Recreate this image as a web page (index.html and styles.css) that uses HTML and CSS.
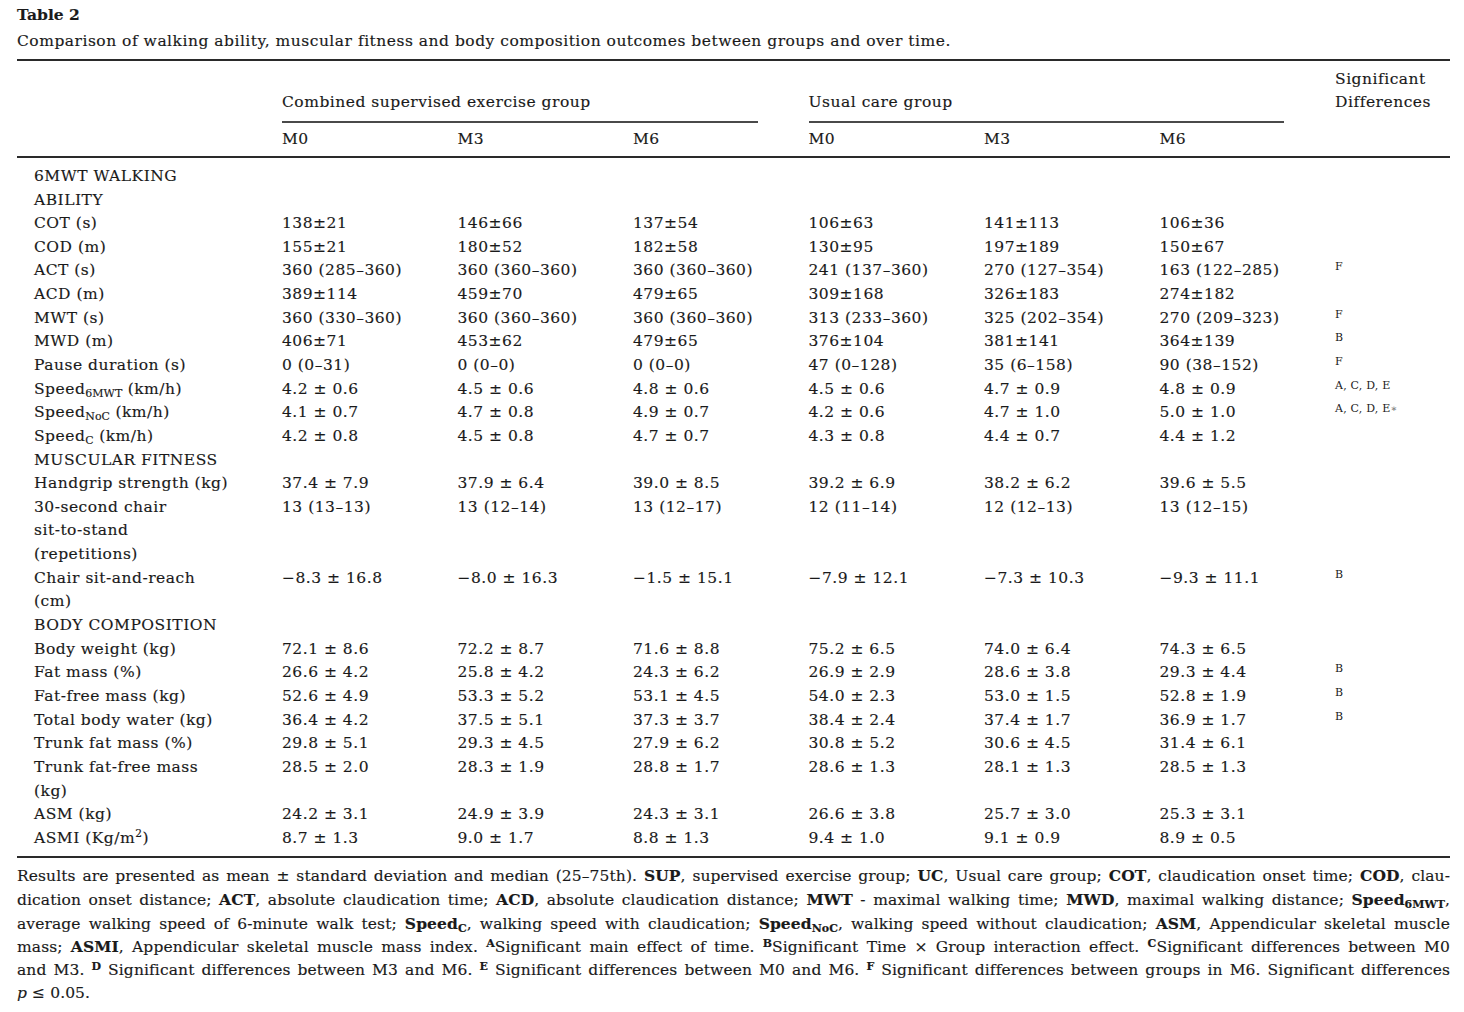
FILE: index.html
```html
<!DOCTYPE html>
<html lang="en">
<head>
<meta charset="utf-8">
<title>Table 2</title>
<link rel="stylesheet" href="styles.css">
</head>
<body>
<div class="page">
  <div class="title">Table 2</div>
  <div class="caption">Comparison of walking ability, muscular fitness and body composition outcomes between groups and over time.</div>

  <table class="data">
    <colgroup>
      <col class="c-label">
      <col class="c-val"><col class="c-val"><col class="c-val">
      <col class="c-val"><col class="c-val"><col class="c-val">
      <col class="c-sig">
    </colgroup>
    <thead>
      <tr class="h1">
        <th></th>
        <th colspan="3" class="grp"><span class="grp-label">Combined supervised exercise group</span></th>
        <th colspan="3" class="grp"><span class="grp-label">Usual care group</span></th>
        <th class="sig-h">Significant<br>Differences</th>
      </tr>
      <tr class="h2">
        <th></th>
        <th>M0</th><th>M3</th><th>M6</th>
        <th>M0</th><th>M3</th><th>M6</th>
        <th></th>
      </tr>
    </thead>
    <tbody>
      <tr class="first"><td class="lab">6MWT WALKING<br>ABILITY</td><td></td><td></td><td></td><td></td><td></td><td></td><td></td></tr>
      <tr><td class="lab">COT (s)</td><td>138±21</td><td>146±66</td><td>137±54</td><td>106±63</td><td>141±113</td><td>106±36</td><td></td></tr>
      <tr><td class="lab">COD (m)</td><td>155±21</td><td>180±52</td><td>182±58</td><td>130±95</td><td>197±189</td><td>150±67</td><td></td></tr>
      <tr><td class="lab">ACT (s)</td><td>360 (285–360)</td><td>360 (360–360)</td><td>360 (360–360)</td><td>241 (137–360)</td><td>270 (127–354)</td><td>163 (122–285)</td><td><span class="sig">F</span></td></tr>
      <tr><td class="lab">ACD (m)</td><td>389±114</td><td>459±70</td><td>479±65</td><td>309±168</td><td>326±183</td><td>274±182</td><td></td></tr>
      <tr><td class="lab">MWT (s)</td><td>360 (330–360)</td><td>360 (360–360)</td><td>360 (360–360)</td><td>313 (233–360)</td><td>325 (202–354)</td><td>270 (209–323)</td><td><span class="sig">F</span></td></tr>
      <tr><td class="lab">MWD (m)</td><td>406±71</td><td>453±62</td><td>479±65</td><td>376±104</td><td>381±141</td><td>364±139</td><td><span class="sig">B</span></td></tr>
      <tr><td class="lab">Pause duration (s)</td><td>0 (0–31)</td><td>0 (0–0)</td><td>0 (0–0)</td><td>47 (0–128)</td><td>35 (6–158)</td><td>90 (38–152)</td><td><span class="sig">F</span></td></tr>
      <tr><td class="lab">Speed<sub>6MWT</sub> (km/h)</td><td>4.2 ± 0.6</td><td>4.5 ± 0.6</td><td>4.8 ± 0.6</td><td>4.5 ± 0.6</td><td>4.7 ± 0.9</td><td>4.8 ± 0.9</td><td><span class="sig">A, C, D, E</span></td></tr>
      <tr><td class="lab">Speed<sub>NoC</sub> (km/h)</td><td>4.1 ± 0.7</td><td>4.7 ± 0.8</td><td>4.9 ± 0.7</td><td>4.2 ± 0.6</td><td>4.7 ± 1.0</td><td>5.0 ± 1.0</td><td><span class="sig">A, C, D, E<span class="ast">∗</span></span></td></tr>
      <tr><td class="lab">Speed<sub>C</sub> (km/h)</td><td>4.2 ± 0.8</td><td>4.5 ± 0.8</td><td>4.7 ± 0.7</td><td>4.3 ± 0.8</td><td>4.4 ± 0.7</td><td>4.4 ± 1.2</td><td></td></tr>
      <tr><td class="lab">MUSCULAR FITNESS</td><td></td><td></td><td></td><td></td><td></td><td></td><td></td></tr>
      <tr><td class="lab">Handgrip strength (kg)</td><td>37.4 ± 7.9</td><td>37.9 ± 6.4</td><td>39.0 ± 8.5</td><td>39.2 ± 6.9</td><td>38.2 ± 6.2</td><td>39.6 ± 5.5</td><td></td></tr>
      <tr><td class="lab">30-second chair<br>sit-to-stand<br>(repetitions)</td><td>13 (13–13)</td><td>13 (12–14)</td><td>13 (12–17)</td><td>12 (11–14)</td><td>12 (12–13)</td><td>13 (12–15)</td><td></td></tr>
      <tr><td class="lab">Chair sit-and-reach<br>(cm)</td><td>−8.3 ± 16.8</td><td>−8.0 ± 16.3</td><td>−1.5 ± 15.1</td><td>−7.9 ± 12.1</td><td>−7.3 ± 10.3</td><td>−9.3 ± 11.1</td><td><span class="sig">B</span></td></tr>
      <tr><td class="lab">BODY COMPOSITION</td><td></td><td></td><td></td><td></td><td></td><td></td><td></td></tr>
      <tr><td class="lab">Body weight (kg)</td><td>72.1 ± 8.6</td><td>72.2 ± 8.7</td><td>71.6 ± 8.8</td><td>75.2 ± 6.5</td><td>74.0 ± 6.4</td><td>74.3 ± 6.5</td><td></td></tr>
      <tr><td class="lab">Fat mass (%)</td><td>26.6 ± 4.2</td><td>25.8 ± 4.2</td><td>24.3 ± 6.2</td><td>26.9 ± 2.9</td><td>28.6 ± 3.8</td><td>29.3 ± 4.4</td><td><span class="sig">B</span></td></tr>
      <tr><td class="lab">Fat-free mass (kg)</td><td>52.6 ± 4.9</td><td>53.3 ± 5.2</td><td>53.1 ± 4.5</td><td>54.0 ± 2.3</td><td>53.0 ± 1.5</td><td>52.8 ± 1.9</td><td><span class="sig">B</span></td></tr>
      <tr><td class="lab">Total body water (kg)</td><td>36.4 ± 4.2</td><td>37.5 ± 5.1</td><td>37.3 ± 3.7</td><td>38.4 ± 2.4</td><td>37.4 ± 1.7</td><td>36.9 ± 1.7</td><td><span class="sig">B</span></td></tr>
      <tr><td class="lab">Trunk fat mass (%)</td><td>29.8 ± 5.1</td><td>29.3 ± 4.5</td><td>27.9 ± 6.2</td><td>30.8 ± 5.2</td><td>30.6 ± 4.5</td><td>31.4 ± 6.1</td><td></td></tr>
      <tr><td class="lab">Trunk fat-free mass<br>(kg)</td><td>28.5 ± 2.0</td><td>28.3 ± 1.9</td><td>28.8 ± 1.7</td><td>28.6 ± 1.3</td><td>28.1 ± 1.3</td><td>28.5 ± 1.3</td><td></td></tr>
      <tr><td class="lab">ASM (kg)</td><td>24.2 ± 3.1</td><td>24.9 ± 3.9</td><td>24.3 ± 3.1</td><td>26.6 ± 3.8</td><td>25.7 ± 3.0</td><td>25.3 ± 3.1</td><td></td></tr>
      <tr class="last"><td class="lab">ASMI (Kg/m<sup>2</sup>)</td><td>8.7 ± 1.3</td><td>9.0 ± 1.7</td><td>8.8 ± 1.3</td><td>9.4 ± 1.0</td><td>9.1 ± 0.9</td><td>8.9 ± 0.5</td><td></td></tr>
    </tbody>
  </table>

  <div class="notes">
    <div class="jl">Results are presented as mean ± standard deviation and median (25–75th). <b>SUP</b>, supervised exercise group; <b>UC</b>, Usual care group; <b>COT</b>, claudication onset time; <b>COD</b>, clau-</div>
    <div class="jl">dication onset distance; <b>ACT</b>, absolute claudication time; <b>ACD</b>, absolute claudication distance; <b>MWT</b> - maximal walking time; <b>MWD</b>, maximal walking distance; <b>Speed<sub>6MWT</sub></b>,</div>
    <div class="jl">average walking speed of 6-minute walk test; <b>Speed<sub>C</sub></b>, walking speed with claudication; <b>Speed<sub>NoC</sub></b>, walking speed without claudication; <b>ASM</b>, Appendicular skeletal muscle</div>
    <div class="jl">mass; <b>ASMI</b>, Appendicular skeletal muscle mass index. <b class="fs">A</b>Significant main effect of time. <b class="fs">B</b>Significant Time × Group interaction effect. <b class="fs">C</b>Significant differences between M0</div>
    <div class="jl">and M3. <b class="fs">D</b> Significant differences between M3 and M6. <b class="fs">E</b> Significant differences between M0 and M6. <b class="fs">F</b> Significant differences between groups in M6. Significant differences</div>
    <div class="ll"><i>p</i> ≤ 0.05.</div>
  </div>
</div>
</body>
</html>
```

FILE: styles.css
```css
html, body {
  margin: 0;
  padding: 0;
  background: #ffffff;
}

body {
  color: #1a1a1a;
  font-family: "DejaVu Serif", "Liberation Serif", serif;
  font-size: 15.5px;
  letter-spacing: 0.5px;
  -webkit-text-stroke: 0.15px #1a1a1a;
}

.page {
  width: 1433px;
  padding: 3px 0 0 17px;
}

.title {
  font-weight: bold;
  line-height: 24px;
  letter-spacing: 0;
}

.caption {
  margin-top: 3px;
  line-height: 23.6px;
}

.data {
  margin-top: 5px;
  width: 1433px;
  border-collapse: collapse;
  table-layout: fixed;
  border-top: 2px solid #2a2a2a;
  border-bottom: 2px solid #2a2a2a;
}

.c-label { width: 265px; }
.c-val { width: 175.5px; }
.c-sig { width: 115px; }

.data th,
.data td {
  padding: 0;
  text-align: left;
  vertical-align: top;
  font-weight: normal;
  line-height: 23.64px;
  white-space: nowrap;
}

.h1 th {
  vertical-align: bottom;
}

.h1 .grp {
  padding-top: 30px;
}

.grp-label {
  display: block;
  margin-right: 51px;
  padding-bottom: 7px;
  border-bottom: 2px solid #4a4a4a;
}

.h1 .sig-h {
  vertical-align: top;
  padding-top: 7px;
}

.h2 th {
  padding-top: 5px;
  padding-bottom: 4px;
  border-bottom: 2px solid #2a2a2a;
}

.data .lab {
  padding-left: 17px;
}

.data tr.first td {
  padding-top: 7px;
}

.data tr.last td {
  padding-bottom: 6px;
}

sub {
  font-size: 11px;
  vertical-align: -3px;
  line-height: 0;
  letter-spacing: 0;
}

sup {
  font-size: 10.5px;
  vertical-align: 6px;
  line-height: 0;
}

.sig {
  display: block;
  padding-top: 1px;
  font-size: 11px;
  line-height: 14px;
  letter-spacing: 0.2px;
  -webkit-text-stroke: 0;
}

.ast {
  color: #777;
  font-size: 10px;
}

.notes {
  margin-top: 6px;
  width: 1433px;
  letter-spacing: 0.1px;
}

.notes .jl {
  height: 23.55px;
  line-height: 23.55px;
  white-space: nowrap;
  word-spacing: -1.5px;
  text-align: justify;
  text-align-last: justify;
}

.notes .ll {
  height: 23.55px;
  line-height: 23.55px;
}

.fs {
  font-size: 11px;
  vertical-align: 5px;
  line-height: 0;
}
```
